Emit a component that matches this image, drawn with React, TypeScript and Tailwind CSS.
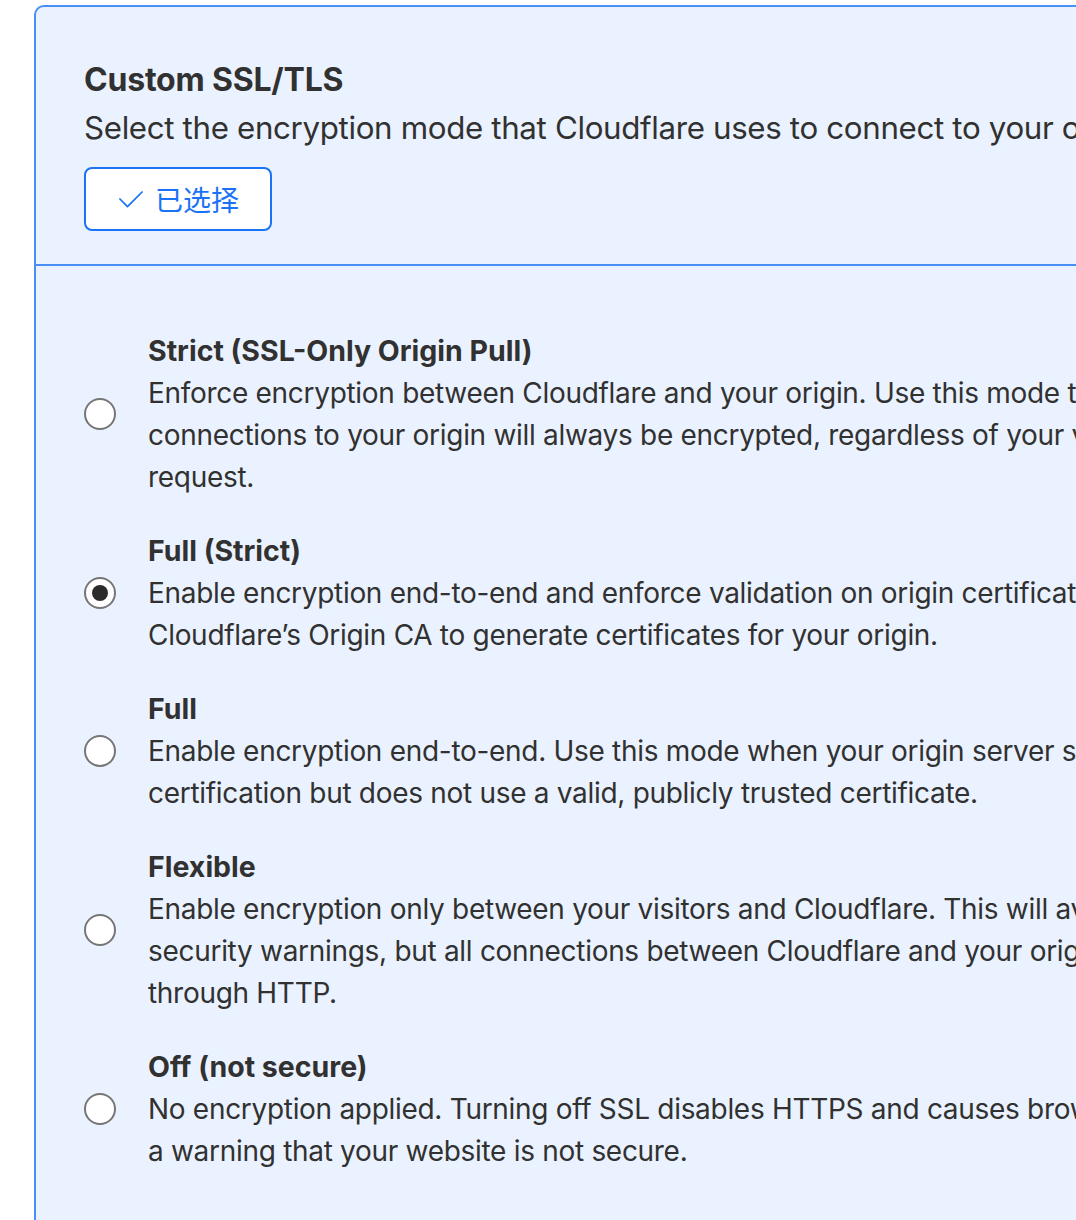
import React from "react";

type Opt = { title: string; lines: string[]; checked?: boolean };

const options: Opt[] = [
  {
    title: "Strict (SSL-Only Origin Pull)",
    lines: [
      "Enforce encryption between Cloudflare and your origin. Use this mode to guarantee",
      "connections to your origin will always be encrypted, regardless of your visitor’s",
      "request.",
    ],
  },
  {
    title: "Full (Strict)",
    checked: true,
    lines: [
      "Enable encryption end-to-end and enforce validation on origin certificates. Use",
      "Cloudflare’s Origin CA to generate certificates for your origin.",
    ],
  },
  {
    title: "Full",
    lines: [
      "Enable encryption end-to-end. Use this mode when your origin server supports SSL",
      "certification but does not use a valid, publicly trusted certificate.",
    ],
  },
  {
    title: "Flexible",
    lines: [
      "Enable encryption only between your visitors and Cloudflare. This will avoid browser",
      "security warnings, but all connections between Cloudflare and your origin are made",
      "through HTTP.",
    ],
  },
  {
    title: "Off (not secure)",
    lines: [
      "No encryption applied. Turning off SSL disables HTTPS and causes browsers to show",
      "a warning that your website is not secure.",
    ],
  },
];

function Radio({ checked }: { checked?: boolean }) {
  return (
    <div className="w-[32px] h-[32px] rounded-full border-2 border-[#767676] bg-white flex items-center justify-center shrink-0">
      {checked && <div className="w-[16px] h-[16px] rounded-full bg-[#2b2b2b]" />}
    </div>
  );
}

export default function App() {
  return (
    <div
      className="w-[1076px] h-[1220px] overflow-hidden bg-white relative"
      style={{ fontFamily: "Inter, 'Noto Sans CJK SC', sans-serif" }}
    >
      <div className="ml-[34px] mt-[5px] w-[1300px] h-[1300px] border-2 border-[#4a8ff5] rounded-[10px] bg-[#ebf2ff] text-[#313131]">
        <div className="pl-[48px] pt-[49px] pb-[33px] border-b-2 border-[#4a8ff5]">
          <div className="text-[32px] leading-[48px] font-bold whitespace-nowrap tracking-[-0.2px]">Custom SSL/TLS</div>
          <div className="mt-[3px] text-[31.3px] leading-[42px] whitespace-nowrap tracking-[-0.35px]">
            Select the encryption mode that Cloudflare uses to connect to your origin server.
          </div>
          <button className="mt-[18px] w-[188px] h-[64px] rounded-[8px] border-2 border-[#1a73f5] bg-white flex items-center justify-center gap-[10px] text-[#1a73f5]">
            <svg width="28" height="28" viewBox="0 0 24 24" fill="none" stroke="currentColor" strokeWidth="1.5" strokeLinecap="round" strokeLinejoin="round">
              <polyline points="2.5,12 9,18.5 21.5,6" />
            </svg>
            <span className="text-[28px] leading-none" style={{ fontFamily: "'Noto Sans CJK SC', sans-serif" }}>已选择</span>
          </button>
        </div>
        <div className="pl-[48px] pt-[64px] flex flex-col gap-[32px]">
          {options.map((o) => (
            <div key={o.title} className="flex items-center gap-[32px]">
              <Radio checked={o.checked} />
              <div className="flex flex-col">
                <div className="text-[28.5px] leading-[42px] font-bold whitespace-nowrap">{o.title}</div>
                {o.lines.map((l) => (
                  <div key={l} className="text-[28px] leading-[42px] whitespace-nowrap tracking-[-0.3px]">{l}</div>
                ))}
              </div>
            </div>
          ))}
        </div>
      </div>
    </div>
  );
}
